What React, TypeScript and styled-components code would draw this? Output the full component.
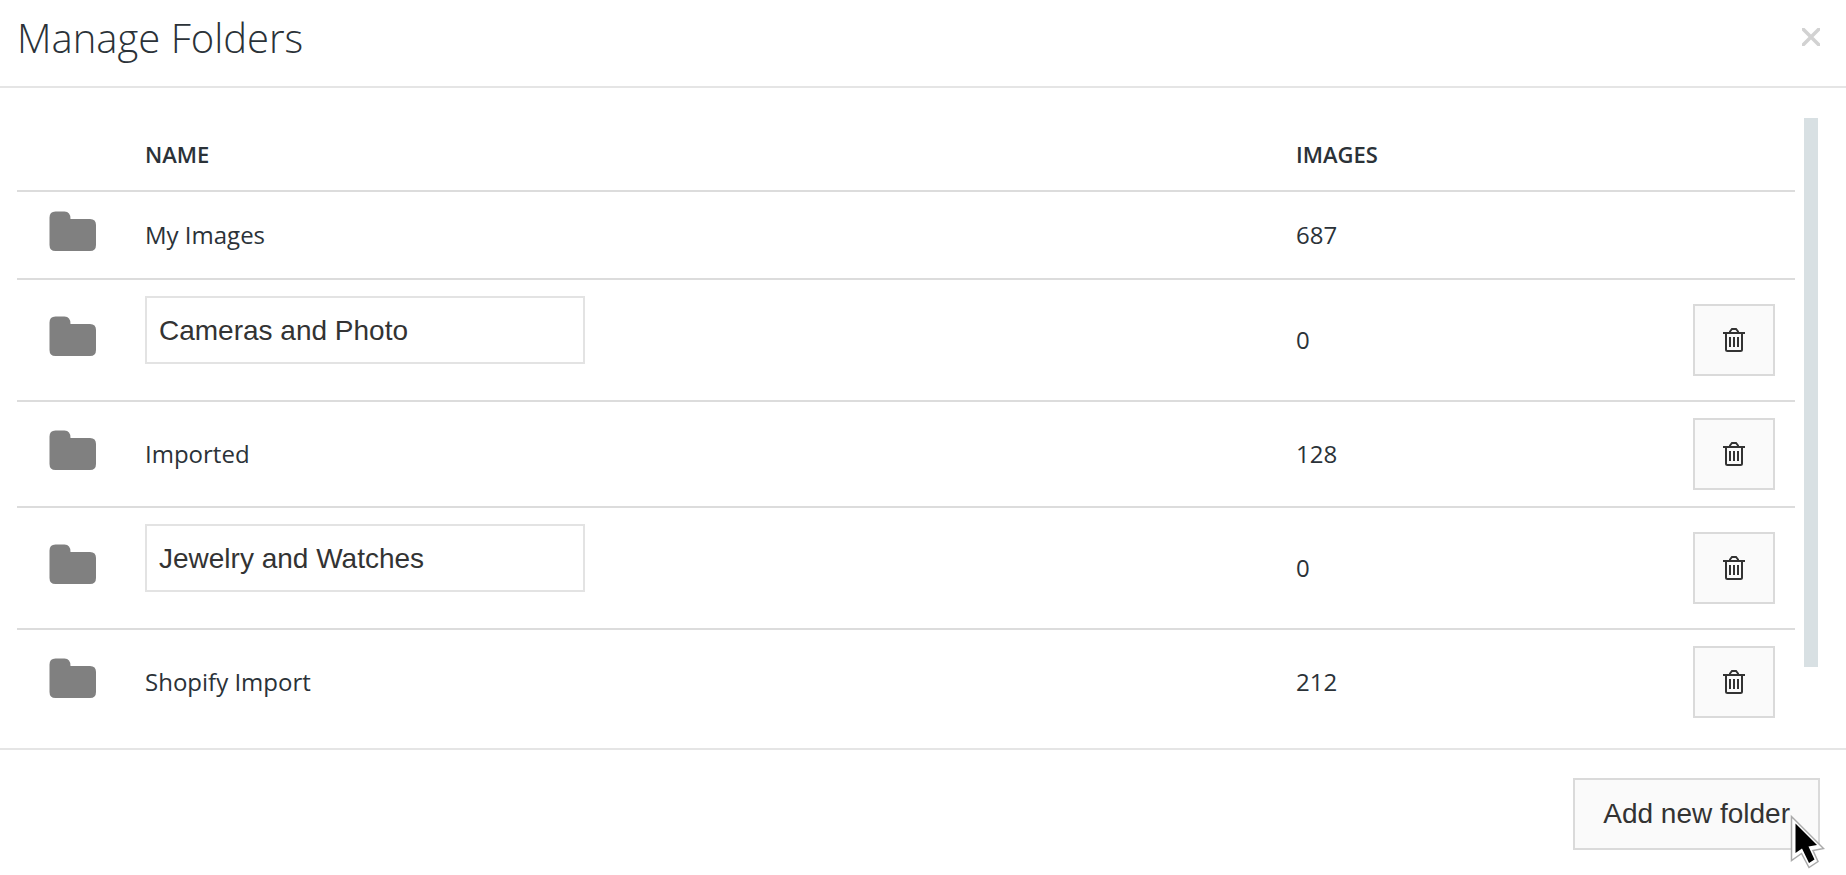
import React, { useState } from "react";
import styled, { createGlobalStyle } from "styled-components";

const GlobalStyle = createGlobalStyle`
  * { box-sizing: border-box; }
  body {
    margin: 0;
    background: #fff;
    color: #2b3238;
    font-family: "Open Sans", "Noto Sans", sans-serif;
  }
`;

const Dialog = styled.main`
  display: flex;
  flex-direction: column;
  min-height: 100vh;
`;

const Header = styled.header`
  display: flex;
  align-items: flex-start;
  justify-content: space-between;
  height: 88px;
  padding: 10px 26px 0 17px;
  border-bottom: 2px solid #e5e5e5;
`;

const Title = styled.h1`
  margin: 0;
  font-size: 40px;
  font-weight: 300;
  line-height: 56px;
`;

const CloseButton = styled.button`
  display: flex;
  margin: 18px 0 0;
  padding: 0;
  border: 0;
  background: none;
  cursor: pointer;
`;

const Body = styled.section`
  display: flex;
  gap: 9px;
  padding: 30px 28px 14px 17px;
`;

const FolderTable = styled.table`
  flex: 1;
  width: 100%;
  table-layout: fixed;
  border-collapse: separate;
  border-spacing: 0;
`;

const IconCol = styled.col`
  width: 112px;
`;

const ImagesCol = styled.col`
  width: 397px;
`;

const ActionCol = styled.col`
  width: 118px;
`;

const HeadCell = styled.th`
  height: 74px;
  padding: 0 16px;
  border-bottom: 2px solid #dcdcdc;
  font-size: 22px;
  font-weight: 600;
  text-align: left;
  text-transform: uppercase;
`;

const Row = styled.tr`
  &:not(:last-child) > td {
    border-bottom: 2px solid #dcdcdc;
  }
`;

const Cell = styled.td`
  padding: 17px 16px;
  font-size: 24px;
  line-height: 52px;
  vertical-align: middle;
`;

const InputCell = styled(Cell)`
  padding: 16px 16px 36px;
`;

const IconCell = styled(Cell)`
  padding: 16px 32px 24px;
  line-height: 0;
`;

const ActionCell = styled(Cell)`
  padding: 16px 20px 16px 16px;
`;

const NameInput = styled.input`
  display: block;
  width: 440px;
  height: 68px;
  padding: 2px 12px 0;
  border: 2px solid #e3e3e3;
  background: #fff;
  color: #333;
  font: 28px "Liberation Sans", Arial, sans-serif;
`;

const Button = styled.button`
  display: flex;
  align-items: center;
  justify-content: center;
  height: 72px;
  padding: 0 28px;
  border: 2px solid #dadada;
  background: #fafafa;
  color: #333;
  font: 28px "Liberation Sans", Arial, sans-serif;
  cursor: pointer;
`;

const Track = styled.div`
  display: grid;
  grid-template-rows: 49fr 6fr;
  width: 14px;
`;

const Thumb = styled.div`
  background: #d8e0e3;
`;

const Footer = styled.footer`
  display: flex;
  justify-content: flex-end;
  padding: 28px 26px 24px;
  border-top: 2px solid #e5e5e5;
`;

const PointerAnchor = styled.div`
  position: relative;
`;

const Pointer = styled.svg`
  position: absolute;
  right: -5px;
  bottom: -20px;
  pointer-events: none;
`;

const FolderIcon = () => (
  <svg width="48" height="40" viewBox="0 0 48 40" aria-hidden="true">
    <path
      fill="#808080"
      d="M6.500 .5H15.500Q21.500 .5 21.500 8H41Q47 8 47 14V34Q47 40 41 40H6.500Q.5 40 .5 34V6.500Q.5 .5 6.500 .5Z"
    />
  </svg>
);

const TrashIcon = () => (
  <svg width="22" height="24" viewBox="0 0 22 24" fill="none" stroke="#333" strokeWidth="2" aria-hidden="true">
    <path d="M0 5H22M7 5V3.500L9 1H13L15 3.500V5M3 5V21.500Q3 23 4.500 23H17.500Q19 23 19 21.500V5M7 9V19M11 9V19M15 9V19" />
  </svg>
);

const CloseIcon = () => (
  <svg width="18" height="18" viewBox="0 0 18 18" fill="none" stroke="#d2d2d2" strokeWidth="3.500" aria-hidden="true">
    <path d="M0 0L18 18M18 0L0 18" />
  </svg>
);

type Folder = { name: string; images: number; editable?: boolean; fixed?: boolean };

const initialFolders: Folder[] = [
  { name: "My Images", images: 687, fixed: true },
  { name: "Cameras and Photo", images: 0, editable: true },
  { name: "Imported", images: 128 },
  { name: "Jewelry and Watches", images: 0, editable: true },
  { name: "Shopify Import", images: 212 },
];

export default function App() {
  const [folders, setFolders] = useState(initialFolders);

  const rename = (index: number, name: string) =>
    setFolders(folders.map((f, i) => (i === index ? { ...f, name } : f)));
  const remove = (index: number) => setFolders(folders.filter((_, i) => i !== index));
  const add = () => setFolders([...folders, { name: "", images: 0, editable: true }]);

  return (
    <Dialog>
      <GlobalStyle />
      <Header>
        <Title>Manage Folders</Title>
        <CloseButton type="button" aria-label="Close">
          <CloseIcon />
        </CloseButton>
      </Header>
      <Body>
        <FolderTable>
          <colgroup>
            <IconCol />
            <col />
            <ImagesCol />
            <ActionCol />
          </colgroup>
          <thead>
            <tr>
              <HeadCell as="td" />
              <HeadCell scope="col">Name</HeadCell>
              <HeadCell scope="col">Images</HeadCell>
              <HeadCell as="td" />
            </tr>
          </thead>
          <tbody>
            {folders.map((folder, index) => (
              <Row key={index}>
                <IconCell>
                  <FolderIcon />
                </IconCell>
                {folder.editable ? (
                  <InputCell>
                    <NameInput
                      type="text"
                      aria-label="Folder name"
                      value={folder.name}
                      onChange={(e) => rename(index, e.target.value)}
                    />
                  </InputCell>
                ) : (
                  <Cell>{folder.name}</Cell>
                )}
                <Cell>{folder.images}</Cell>
                <ActionCell>
                  {!folder.fixed && (
                    <Button type="button" aria-label={`Delete ${folder.name}`} onClick={() => remove(index)}>
                      <TrashIcon />
                    </Button>
                  )}
                </ActionCell>
              </Row>
            ))}
          </tbody>
        </FolderTable>
        <Track>
          <Thumb />
        </Track>
      </Body>
      <Footer>
        <PointerAnchor>
          <Button type="button" onClick={add}>
            Add new folder
          </Button>
          <Pointer width="36" height="56" viewBox="0 0 36 56" aria-hidden="true">
            <path
              d="M2.500 2.500V46.500L12.500 39.500L20 53.500L29 47.500L24 36.500L34.500 34.500Z"
              fill="#fff"
              stroke="#aaa"
              strokeWidth="1.500"
            />
            <path d="M6.500 9.500V39L13 34.500L20 49L25.500 45.500L19.500 32.500L28 31Z" fill="#000" />
          </Pointer>
        </PointerAnchor>
      </Footer>
    </Dialog>
  );
}
